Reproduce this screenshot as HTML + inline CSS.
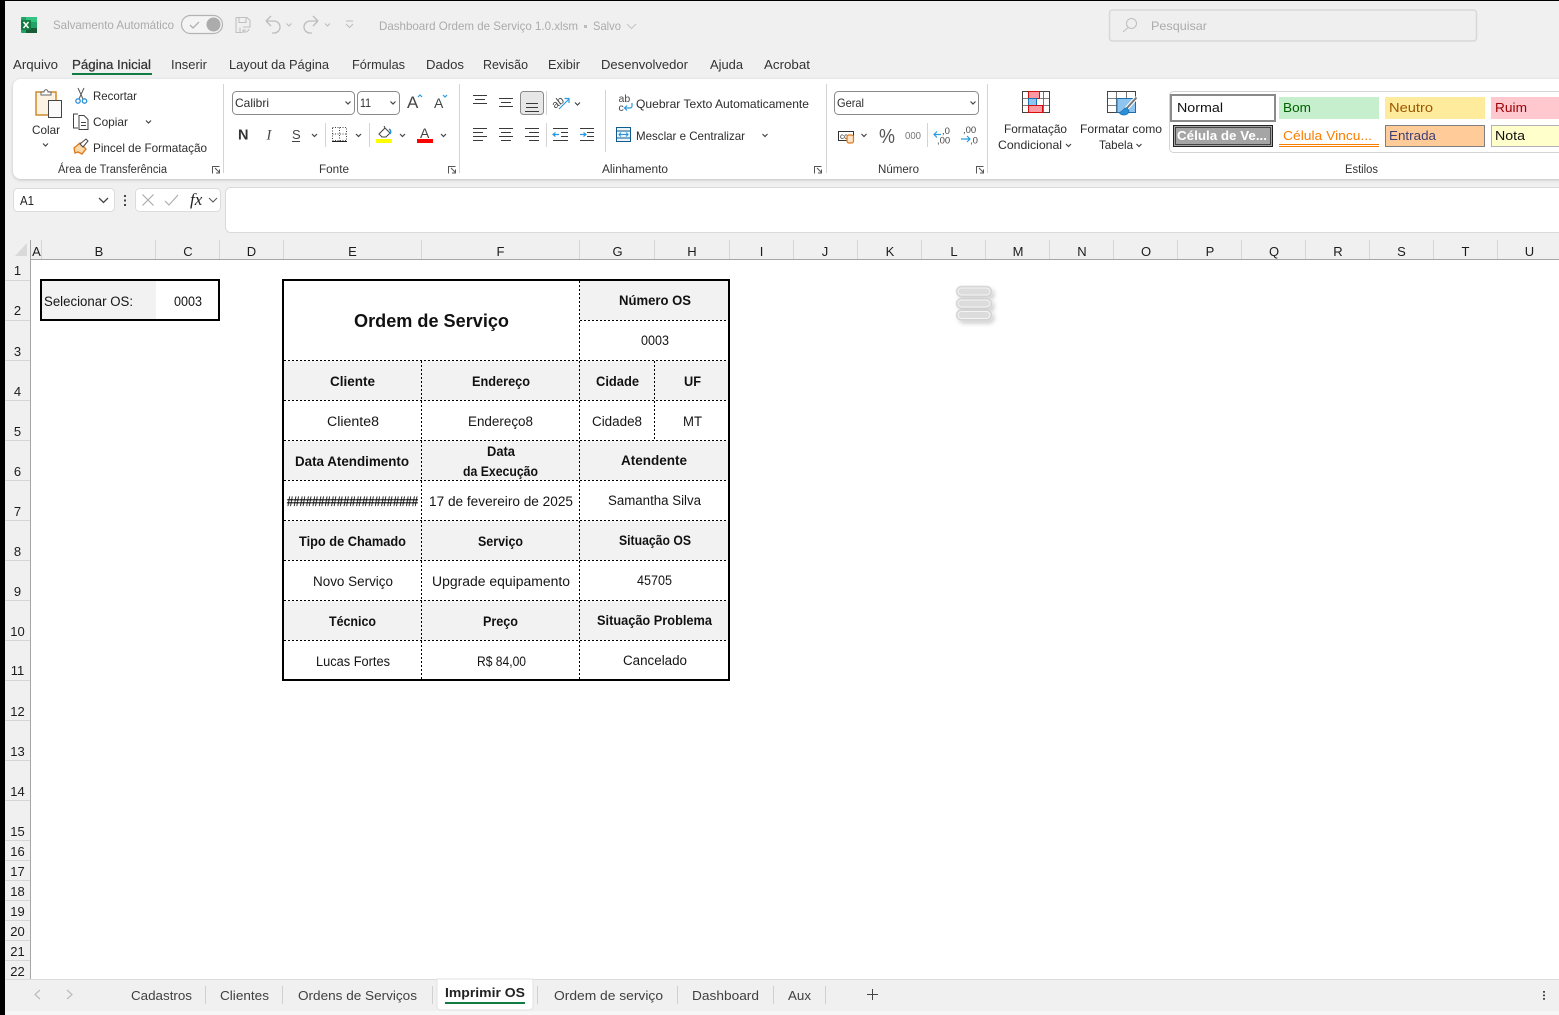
<!DOCTYPE html>
<html><head><meta charset="utf-8"><title>Excel</title>
<style>
html,body{margin:0;padding:0;width:1559px;height:1015px;overflow:hidden;background:#f0f0f0}
svg{display:block;position:absolute;left:0;top:0}
text{font-family:"Liberation Sans",sans-serif;fill:#2a2a2a;white-space:pre}
.q{font-size:12px;fill:#ababab}
.t{font-size:12.5px;fill:#333}
.r{font-size:12px;fill:#2c2c2c}
.g{font-size:11.5px;fill:#333}
.s{font-size:13px}
.c{font-size:13.5px;fill:#151515}
.b{font-size:13.5px;font-weight:bold;fill:#111}
.h{font-size:13px;fill:#1c1c1c;text-anchor:middle}
.tb{font-size:13px;fill:#404040}
.ch{fill:none;stroke:#444;stroke-width:1.2}
.ln{fill:none;stroke:#3a3a3a;stroke-width:1.1}
.sep{stroke:#d4d4d4;stroke-width:1}
.dot{stroke:#000;stroke-width:1;stroke-dasharray:2 2;fill:none}
.hs{stroke:#d6d6d6;stroke-width:1}
.blue{fill:none;stroke:#2b9ae0;stroke-width:1.2}
</style></head><body>
<svg width="1559" height="1015" viewBox="0 0 1559 1015" xmlns="http://www.w3.org/2000/svg">
<defs>
<filter id="sh" x="-5%" y="-20%" width="110%" height="140%"><feDropShadow dx="0" dy="1" stdDeviation="1.5" flood-color="#000" flood-opacity=".2"/></filter>
<filter id="ps" x="-30%" y="-50%" width="170%" height="220%"><feGaussianBlur in="SourceGraphic" stdDeviation=".45" result="b"/><feDropShadow in="b" dx="2.500" dy="3" stdDeviation="2.200" flood-color="#000" flood-opacity=".2"/></filter>
</defs>
<rect width="1559" height="1015" fill="#f0f0f0"/>

<!-- Title bar -->
<rect x="21" y="17" width="16" height="16" rx="1" fill="#21a366"/>
<rect x="26" y="17" width="11" height="5" fill="#33c481"/>
<rect x="26" y="28" width="11" height="5" fill="#185c37"/>
<rect x="21" y="20" width="10" height="10" rx="1" fill="#107c41"/>
<path d="M23.5 22l5 6M28.5 22l-5 6" stroke="#fff" stroke-width="1.5" fill="none"/>
<text class="q" x="53" y="29" textLength="121" lengthAdjust="spacingAndGlyphs">Salvamento Automático</text>
<rect x="181.5" y="15.5" width="41" height="18" rx="9" fill="#f4f4f4" stroke="#b3b3b3" stroke-width="1.2"/>
<path d="M190 25l3 3 6-6" fill="none" stroke="#b0b0b0" stroke-width="1.3"/>
<circle cx="213.5" cy="24.5" r="7" fill="#acacac"/>
<path d="M236 17.500h11l3 3v6M236 17.500v15h6M239 17.500v5h7v-5M240 32.500v-5M243 27h7v-1M249 29c-1 3-4 4-6 2M243 33v-3h3" fill="none" stroke="#c0c0c0" stroke-width="1.1"/>
<path d="M266 21h8a6 6 0 0 1 0 12h-2M266 21l5-5M266 21l5 5" fill="none" stroke="#bcbcbc" stroke-width="1.3"/>
<path d="M286.500 23.500l2.500 2.500 2.500-2.500M325 23.500l2.500 2.500 2.500-2.500" fill="none" stroke="#bcbcbc"/>
<path d="M318 21h-8a6 6 0 0 0 0 12h2M318 21l-5-5M318 21l-5 5" fill="none" stroke="#bcbcbc" stroke-width="1.3"/>
<path d="M346 21h7M346 24l3.500 3.500 3.500-3.500" fill="none" stroke="#bcbcbc"/>
<text class="q" x="379" y="30" textLength="199" lengthAdjust="spacingAndGlyphs">Dashboard Ordem de Serviço 1.0.xlsm</text>
<rect x="584" y="25" width="3" height="3" fill="#bcbcbc"/>
<text class="q" x="593" y="30" textLength="28" lengthAdjust="spacingAndGlyphs">Salvo</text>
<path d="M627 24l4.500 4.500 4.500-4.500" fill="none" stroke="#c4c4c4"/>
<rect x="1109.500" y="10" width="367" height="31" rx="3" fill="#efefef" stroke="#d8d8d8" stroke-width="1.500"/>
<circle cx="1131.500" cy="23.500" r="5" fill="none" stroke="#c0c0c0" stroke-width="1.100"/>
<path d="M1128 27.500l-5 4.500" stroke="#c0c0c0" stroke-width="1.100"/>
<text class="q" x="1151" y="30" textLength="56" lengthAdjust="spacingAndGlyphs">Pesquisar</text>

<!-- Ribbon tabs -->
<text class="t" x="13" y="69" textLength="45" lengthAdjust="spacingAndGlyphs">Arquivo</text>
<text class="t" x="72" y="69" textLength="79" lengthAdjust="spacingAndGlyphs" stroke="#333" stroke-width=".25">Página Inicial</text>
<rect x="72" y="73" width="80" height="2" fill="#107c41"/>
<text class="t" x="171" y="69" textLength="36" lengthAdjust="spacingAndGlyphs">Inserir</text>
<text class="t" x="229" y="69" textLength="100" lengthAdjust="spacingAndGlyphs">Layout da Página</text>
<text class="t" x="352" y="69" textLength="53" lengthAdjust="spacingAndGlyphs">Fórmulas</text>
<text class="t" x="426" y="69" textLength="38" lengthAdjust="spacingAndGlyphs">Dados</text>
<text class="t" x="483" y="69" textLength="45" lengthAdjust="spacingAndGlyphs">Revisão</text>
<text class="t" x="548" y="69" textLength="32" lengthAdjust="spacingAndGlyphs">Exibir</text>
<text class="t" x="601" y="69" textLength="87" lengthAdjust="spacingAndGlyphs">Desenvolvedor</text>
<text class="t" x="710" y="69" textLength="33" lengthAdjust="spacingAndGlyphs">Ajuda</text>
<text class="t" x="764" y="69" textLength="46" lengthAdjust="spacingAndGlyphs">Acrobat</text>

<!-- Ribbon -->
<rect x="13" y="79" width="1560" height="100" rx="8" fill="#fff" filter="url(#sh)"/>
<path class="sep" d="M223.500 84v89M459.500 84v89M826.500 84v89M987.500 84v89"/>
<path class="sep" d="M325.500 123v24M369.500 123v24M546.500 91v24M546.500 123v24M605.500 90v62M927.500 123v24"/>
<text class="g" x="58" y="173" textLength="109" lengthAdjust="spacingAndGlyphs">Área de Transferência</text>
<text class="g" x="319" y="173" textLength="30" lengthAdjust="spacingAndGlyphs">Fonte</text>
<text class="g" x="602" y="173" textLength="66" lengthAdjust="spacingAndGlyphs">Alinhamento</text>
<text class="g" x="878" y="173" textLength="41" lengthAdjust="spacingAndGlyphs">Número</text>
<text class="g" x="1345" y="173" textLength="33" lengthAdjust="spacingAndGlyphs">Estilos</text>
<path d="M212.500 173.500v-7h7M215 168l4.500 4.500M219.500 169.500v3.500h-3.500M448.500 173.500v-7h7M451 168l4.500 4.500M455.500 169.500v3.500h-3.500M814.500 173.500v-7h7M817 168l4.500 4.500M821.500 169.500v3.500h-3.500M976.500 173.500v-7h7M979 168l4.500 4.500M983.500 169.500v3.500h-3.500" fill="none" stroke="#555"/>

<!-- Clipboard -->
<rect x="36" y="92" width="20" height="23" fill="#fdf3e2" stroke="#d08a2a" stroke-width="1.500"/>
<path d="M41 95v-3h3c0-3 4-3 4 0h3v3z" fill="#fff" stroke="#666"/>
<rect x="48.500" y="100.500" width="13" height="17" fill="#fafafa" stroke="#444"/>
<text class="r" x="32" y="134" textLength="28" lengthAdjust="spacingAndGlyphs">Colar</text>
<path class="ch" d="M43 143.500l2.500 2.500 2.500-2.500"/>
<path d="M78 88l5 11M84 88l-5 11" stroke="#555" fill="none"/>
<circle cx="78" cy="101" r="2.200" fill="none" stroke="#2b8fd8" stroke-width="1.300"/>
<circle cx="84.500" cy="101" r="2.200" fill="none" stroke="#2b8fd8" stroke-width="1.300"/>
<text class="r" x="93" y="100" textLength="44" lengthAdjust="spacingAndGlyphs">Recortar</text>
<path d="M78 114h-4.500v14h4.500M79 115.500h5l4 4v10h-9zM81 122.500h5M81 125.500h5" fill="none" stroke="#444" stroke-width="1"/>
<text class="r" x="93" y="126" textLength="35" lengthAdjust="spacingAndGlyphs">Copiar</text>
<path class="ch" d="M146 120.500l2.500 2.500 2.500-2.500"/>
<path d="M74 148l6-5 6 6-4 5-4-2-3 1z" fill="#fbd9a8" stroke="#e0781a" stroke-width="1.300"/>
<path d="M80 144l6-5 2 2-5 6z" fill="#fff" stroke="#444"/>
<text class="r" x="93" y="152" textLength="114" lengthAdjust="spacingAndGlyphs">Pincel de Formatação</text>

<!-- Font -->
<rect x="232.500" y="91.500" width="122" height="23" rx="4" fill="#fff" stroke="#8a8a8a"/>
<text class="r" x="235" y="107" textLength="34" lengthAdjust="spacingAndGlyphs">Calibri</text>
<path class="ch" d="M345.500 101.500l2.500 2.500 2.500-2.500"/>
<rect x="357.500" y="91.500" width="42" height="23" rx="4" fill="#fff" stroke="#8a8a8a"/>
<text class="r" x="360" y="107" textLength="11" lengthAdjust="spacingAndGlyphs">11</text>
<path class="ch" d="M390.500 101.500l2.500 2.500 2.500-2.500"/>
<text x="407" y="108" font-size="17" style="fill:#444">A</text>
<path class="blue" d="M418 97l2-2 2 2"/>
<text x="434" y="108" font-size="14" style="fill:#444">A</text>
<path class="blue" d="M443 95l2 2 2-2"/>
<text x="238" y="139.500" font-size="14.500" font-weight="bold" style="fill:#333">N</text>
<text x="266.500" y="139.500" font-size="14.500" font-style="italic" style="font-family:'Liberation Serif',serif;fill:#444">I</text>
<text x="292" y="139" font-size="13" style="fill:#444">S</text>
<rect x="292" y="141" width="8" height="1" fill="#444"/>
<path class="ch" d="M312 134l2.500 2.500 2.500-2.500M356 134l2.500 2.500 2.500-2.500M400 134l2.500 2.500 2.500-2.500M441 134l2.500 2.500 2.500-2.500"/>
<path d="M332.500 127.500h14v13h-14zM339.500 127.500v13M332.500 134h14" fill="none" stroke="#444" stroke-dasharray="1 1.500"/>
<rect x="332" y="141" width="15" height="1" fill="#222"/>
<path d="M379 134l6-6 5 5-4 4h-4zM385 128l-1-2" fill="#fff" stroke="#444"/>
<path d="M389 129c2 1 2 3 1 5" fill="none" stroke="#2b8fd8" stroke-width="1.500"/>
<rect x="376" y="139" width="16" height="4" fill="#ffff00"/>
<text x="420" y="138" font-size="14" style="fill:#444">A</text>
<rect x="417" y="139" width="16" height="4" fill="#ff0000"/>

<!-- Alignment -->
<rect x="520.500" y="91.500" width="23" height="23" rx="3" fill="#e7e7e7" stroke="#8a8a8a"/>
<path class="ln" d="M473 95.500h14M475 99.500h10M473 103.500h14M499 98.500h14M501 102.500h10M499 106.500h14M526 103.500h12M526 107.500h12M525 111.500h14"/>
<path class="ln" d="M473 128.500h14M473 132.500h10M473 136.500h14M473 140.500h10M499 128.500h14M501 132.500h10M499 136.500h14M501 140.500h10M525 128.500h14M529 132.500h10M525 136.500h14M529 140.500h10"/>
<path class="ln" d="M553 128.500h15M561 132.500h7M561 136.500h7M553 140.500h15M580 128.500h14M587 132.500h7M587 136.500h7M580 140.500h14"/>
<path class="blue" d="M553 134.500h6M555.500 132.500l-2.500 2 2.500 2M580 134.500h5.500M583.500 132.500l2.500 2-2.500 2"/>
<text x="552" y="106" font-size="11" transform="rotate(-38 558 103)" style="fill:#444">ab</text>
<path class="blue" d="M559 109l10-10M564.500 98.500h4.500v4.500"/>
<path class="ch" d="M575 102.500l2.500 2.500 2.500-2.500"/>
<text x="618.500" y="102" font-size="10.500" style="fill:#444">ab</text>
<text x="618.500" y="111" font-size="10.500" style="fill:#444">c</text>
<path class="blue" d="M632 103v3a2 2 0 0 1-2 2h-5M627 105.500l-2.500 2.500 2.500 2.500"/>
<text class="r" x="636" y="108" textLength="173" lengthAdjust="spacingAndGlyphs">Quebrar Texto Automaticamente</text>
<rect x="616.500" y="127.500" width="14" height="14" fill="#eaf4fc" stroke="#0f5c8c"/>
<path d="M616.500 131h14M616.500 138h14" stroke="#0f5c8c"/>
<path d="M619 134.500h9M621 132.500l-2 2 2 2M626 132.500l2 2-2 2" fill="none" stroke="#2b8fd8"/>
<text class="r" x="636" y="140" textLength="109" lengthAdjust="spacingAndGlyphs">Mesclar e Centralizar</text>
<path class="ch" d="M762.500 134l2.500 2.500 2.500-2.500"/>

<!-- Number -->
<rect x="834.500" y="91.500" width="144" height="23" rx="4" fill="#fff" stroke="#8a8a8a"/>
<text class="r" x="837" y="107" textLength="27" lengthAdjust="spacingAndGlyphs">Geral</text>
<path class="ch" d="M970.500 101.500l2.500 2.500 2.500-2.500"/>
<rect x="838.500" y="131.500" width="15" height="9" fill="#fff" stroke="#333"/>
<text x="840" y="139" font-size="8" style="fill:#333">cc</text>
<rect x="847" y="135" width="6.500" height="8" rx="2" fill="#fde3c4" stroke="#e0781a" stroke-width="1.200"/>
<path class="ch" d="M861.500 134l2.500 2.500 2.500-2.500"/>
<text x="879" y="143" font-size="20" textLength="16" lengthAdjust="spacingAndGlyphs" style="fill:#555">%</text>
<text x="905" y="139" font-size="10" textLength="16" lengthAdjust="spacingAndGlyphs" style="fill:#777">000</text>
<path class="blue" d="M934 134.500h7M937 131.500l-3 3 3 3"/>
<text x="942" y="134" font-size="9.500" style="fill:#444">,0</text>
<text x="937" y="143.500" font-size="9.500" style="fill:#444">,00</text>
<text x="963" y="133" font-size="9.500" style="fill:#444">,00</text>
<path class="blue" d="M961 139h9M967 136l3 3-3 3"/>
<text x="970" y="143.500" font-size="9.500" style="fill:#444">,0</text>

<!-- Conditional formatting -->
<rect x="1022.500" y="91.500" width="27" height="21" fill="#fff" stroke="#444"/>
<path d="M1028.500 91.500v21M1036.500 91.500v21M1043.500 91.500v21M1022.500 98.500h27M1022.500 105.500h27" fill="none" stroke="#555" stroke-width=".8"/>
<rect x="1028.500" y="91.500" width="11" height="7" fill="#ff9aa2" stroke="#d01010"/>
<rect x="1028.500" y="98.500" width="8" height="7" fill="#8ec4ee" stroke="#1a6fb0"/>
<rect x="1028.500" y="105.500" width="14" height="7" fill="#ff9aa2" stroke="#d01010"/>
<text class="r" x="1004" y="133" textLength="63" lengthAdjust="spacingAndGlyphs">Formatação</text>
<text class="r" x="998" y="149" textLength="64" lengthAdjust="spacingAndGlyphs">Condicional</text>
<path class="ch" d="M1066 144l2.500 2.500 2.500-2.500"/>
<!-- Format as table -->
<rect x="1107.500" y="91.500" width="28" height="21" fill="#fff" stroke="#444"/>
<path d="M1116.500 91.500v21M1126.500 91.500v21M1107.500 98.500h28M1107.500 105.500h28" stroke="#555" stroke-width=".8"/>
<rect x="1117" y="98.500" width="18.500" height="14" fill="#8ec4ee" stroke="#1a6fb0"/>
<path d="M1136.500 97.500l-10 11" stroke="#fff" stroke-width="4"/>
<path d="M1136.500 97.500l-10 11" stroke="#777" stroke-width="2"/>
<path d="M1127 108c-3-1-4 4-8 4.500c3 4 10 3 10-2z" fill="#2b8fd8" stroke="#1a6fb0" stroke-width=".7"/>
<text class="r" x="1080" y="133" textLength="82" lengthAdjust="spacingAndGlyphs">Formatar como</text>
<text class="r" x="1099" y="149" textLength="34" lengthAdjust="spacingAndGlyphs">Tabela</text>
<path class="ch" d="M1136.500 144l2.500 2.500 2.500-2.500"/>

<!-- Styles -->
<rect x="1169.500" y="91.500" width="400" height="61" rx="4" fill="#fff" stroke="#d4d4d4"/>
<rect x="1171" y="95" width="104" height="26" fill="#fff" stroke="#8a8a8a" stroke-width="2"/>
<text class="s" x="1177" y="112" textLength="46" lengthAdjust="spacingAndGlyphs" style="fill:#111">Normal</text>
<rect x="1279" y="97" width="100" height="22" fill="#c6efce"/>
<text class="s" x="1283" y="112" textLength="28" lengthAdjust="spacingAndGlyphs" style="fill:#006100">Bom</text>
<rect x="1385" y="97" width="100" height="22" fill="#ffeb9c"/>
<text class="s" x="1389" y="112" textLength="44" lengthAdjust="spacingAndGlyphs" style="fill:#9c5700">Neutro</text>
<rect x="1491" y="97" width="80" height="22" fill="#ffc7ce"/>
<text class="s" x="1495" y="112" textLength="32" lengthAdjust="spacingAndGlyphs" style="fill:#9c0006">Ruim</text>
<rect x="1173.500" y="125.500" width="99" height="21" fill="#a5a5a5" stroke="#222"/>
<rect x="1175.500" y="127.500" width="95" height="17" fill="none" stroke="#444"/>
<text class="s" x="1177" y="140" textLength="90" lengthAdjust="spacingAndGlyphs" font-weight="bold" style="fill:#fff">Célula de Ve...</text>
<text class="s" x="1283" y="140" textLength="89" lengthAdjust="spacingAndGlyphs" style="fill:#fa7d00">Célula Vincu...</text>
<path d="M1279 144.500h100M1279 146.500h100" stroke="#fa7d00"/>
<rect x="1385.500" y="125.500" width="99" height="21" fill="#ffcc99" stroke="#7f7f7f"/>
<text class="s" x="1389" y="140" textLength="47" lengthAdjust="spacingAndGlyphs" style="fill:#3f3f76">Entrada</text>
<rect x="1491.500" y="125.500" width="80" height="21" fill="#ffffcc" stroke="#b2b2b2"/>
<text class="s" x="1495" y="140" textLength="30" lengthAdjust="spacingAndGlyphs" style="fill:#111">Nota</text>

<!-- Formula bar -->
<rect x="13.500" y="188.500" width="101" height="23" rx="4" fill="#fff" stroke="#dcdcdc"/>
<text class="s" x="20" y="205" textLength="14" lengthAdjust="spacingAndGlyphs" style="fill:#222">A1</text>
<path d="M99 198l4.500 4.500 4.500-4.500" fill="none" stroke="#444" stroke-width="1.300"/>
<path d="M125 195v2M125 199.500v2M125 204v2" stroke="#444" stroke-width="2"/>
<rect x="135.500" y="188.500" width="85" height="23" rx="4" fill="#fff" stroke="#dcdcdc"/>
<path d="M142.500 194.500l11 11M153.500 194.500l-11 11M165 201l4 4 9-10" fill="none" stroke="#aaa" stroke-width="1.100"/>
<text x="190" y="205" font-size="17" font-style="italic" style="font-family:'Liberation Serif',serif;fill:#222">fx</text>
<path d="M209 198l4 4 4-4" fill="none" stroke="#555"/>
<rect x="225.500" y="187.500" width="1345" height="45" rx="5" fill="#fff" stroke="#dadada"/>

<!-- Sheet -->
<rect x="31" y="260" width="1528" height="720" fill="#fff"/>
<path d="M15 256h12v-13z" fill="#d9d9d9"/>
<path class="hs" d="M41.500 240v19M155.500 240v19M219.500 240v19M283.500 240v19M421.500 240v19M579.500 240v19M654.500 240v19M729.500 240v19M793.500 240v19M857.500 240v19M921.500 240v19M985.500 240v19M1049.500 240v19M1113.500 240v19M1177.500 240v19M1241.500 240v19M1305.500 240v19M1369.500 240v19M1433.500 240v19M1497.500 240v19"/>
<path class="hs" d="M5 280.500h25M5 320.500h25M5 360.500h25M5 400.500h25M5 440.500h25M5 480.500h25M5 520.500h25M5 560.500h25M5 600.500h25M5 640.500h25M5 680.500h25M5 720.500h25M5 760.500h25M5 800.500h25M5 840.500h25M5 860.500h25M5 880.500h25M5 900.500h25M5 920.500h25M5 940.500h25M5 960.500h25"/>
<rect x="30" y="259" width="1529" height="1" fill="#a6a6a6"/>
<rect x="30" y="240" width="1" height="740" fill="#a6a6a6"/>
<text class="h" x="36.500" y="256">A</text><text class="h" x="99" y="256">B</text><text class="h" x="188" y="256">C</text><text class="h" x="251.500" y="256">D</text><text class="h" x="352.500" y="256">E</text><text class="h" x="500.500" y="256">F</text><text class="h" x="617.500" y="256">G</text><text class="h" x="692" y="256">H</text><text class="h" x="761.500" y="256">I</text><text class="h" x="825" y="256">J</text><text class="h" x="890" y="256">K</text><text class="h" x="954" y="256">L</text><text class="h" x="1018" y="256">M</text><text class="h" x="1082" y="256">N</text><text class="h" x="1146" y="256">O</text><text class="h" x="1210" y="256">P</text><text class="h" x="1274" y="256">Q</text><text class="h" x="1338" y="256">R</text><text class="h" x="1401.500" y="256">S</text><text class="h" x="1465.500" y="256">T</text><text class="h" x="1529.500" y="256">U</text>
<text class="h" x="17.500" y="275">1</text><text class="h" x="17.500" y="315">2</text><text class="h" x="17.500" y="356">3</text><text class="h" x="17.500" y="396">4</text><text class="h" x="17.500" y="436">5</text><text class="h" x="17.500" y="476">6</text><text class="h" x="17.500" y="516">7</text><text class="h" x="17.500" y="556">8</text><text class="h" x="17.500" y="596">9</text><text class="h" x="17.500" y="636">10</text><text class="h" x="17.500" y="675">11</text><text class="h" x="17.500" y="716">12</text><text class="h" x="17.500" y="756">13</text><text class="h" x="17.500" y="796">14</text><text class="h" x="17.500" y="836">15</text><text class="h" x="17.500" y="856">16</text><text class="h" x="17.500" y="876">17</text><text class="h" x="17.500" y="896">18</text><text class="h" x="17.500" y="916">19</text><text class="h" x="17.500" y="936">20</text><text class="h" x="17.500" y="956">21</text><text class="h" x="17.500" y="976">22</text>

<!-- Selector -->
<rect x="41" y="280" width="115" height="40" fill="#f2f2f2"/>
<rect x="41" y="280" width="178" height="40" fill="none" stroke="#000" stroke-width="2"/>
<text class="c" x="44" y="306" textLength="89" lengthAdjust="spacingAndGlyphs">Selecionar OS:</text>
<text class="c" x="174" y="306" textLength="28" lengthAdjust="spacingAndGlyphs">0003</text>

<!-- Form -->
<rect x="580" y="281" width="148" height="39" fill="#f2f2f2"/>
<rect x="284" y="361" width="444" height="39" fill="#f2f2f2"/>
<rect x="284" y="441" width="444" height="39" fill="#f2f2f2"/>
<rect x="284" y="521" width="444" height="39" fill="#f2f2f2"/>
<rect x="284" y="601" width="444" height="39" fill="#f2f2f2"/>
<path class="dot" d="M580 320.500h148M284 360.500h444M284 400.500h444M284 440.500h444M284 480.500h444M284 520.500h444M284 560.500h444M284 600.500h444M284 640.500h444M421.500 361v318M579.500 281v398M654.500 361v79"/>
<rect x="283" y="280" width="446" height="400" fill="none" stroke="#000" stroke-width="2"/>
<text x="354" y="327" font-size="18" font-weight="bold" textLength="155" lengthAdjust="spacingAndGlyphs" style="fill:#111">Ordem de Serviço</text>
<text class="b" x="619" y="305" textLength="72" lengthAdjust="spacingAndGlyphs">Número OS</text>
<text class="c" x="641" y="345" textLength="28" lengthAdjust="spacingAndGlyphs">0003</text>
<text class="b" x="330" y="386" textLength="45" lengthAdjust="spacingAndGlyphs">Cliente</text>
<text class="b" x="472" y="386" textLength="58" lengthAdjust="spacingAndGlyphs">Endereço</text>
<text class="b" x="596" y="386" textLength="43" lengthAdjust="spacingAndGlyphs">Cidade</text>
<text class="b" x="684" y="386" textLength="17" lengthAdjust="spacingAndGlyphs">UF</text>
<text class="c" x="327" y="426" textLength="52" lengthAdjust="spacingAndGlyphs">Cliente8</text>
<text class="c" x="468" y="426" textLength="65" lengthAdjust="spacingAndGlyphs">Endereço8</text>
<text class="c" x="592" y="426" textLength="50" lengthAdjust="spacingAndGlyphs">Cidade8</text>
<text class="c" x="683" y="426" textLength="19" lengthAdjust="spacingAndGlyphs">MT</text>
<text class="b" x="295" y="466" textLength="114" lengthAdjust="spacingAndGlyphs">Data Atendimento</text>
<text class="b" x="487" y="456" textLength="28" lengthAdjust="spacingAndGlyphs">Data</text>
<text class="b" x="463" y="476" textLength="75" lengthAdjust="spacingAndGlyphs">da Execução</text>
<text class="b" x="621" y="465" textLength="66" lengthAdjust="spacingAndGlyphs">Atendente</text>
<text class="c" x="287" y="506" textLength="131" lengthAdjust="spacingAndGlyphs" stroke="#151515" stroke-width=".35">#####################</text>
<text class="c" x="429" y="506" textLength="144" lengthAdjust="spacingAndGlyphs">17 de fevereiro de 2025</text>
<text class="c" x="608" y="505" textLength="93" lengthAdjust="spacingAndGlyphs">Samantha Silva</text>
<text class="b" x="299" y="546" textLength="107" lengthAdjust="spacingAndGlyphs">Tipo de Chamado</text>
<text class="b" x="478" y="546" textLength="45" lengthAdjust="spacingAndGlyphs">Serviço</text>
<text class="b" x="619" y="545" textLength="72" lengthAdjust="spacingAndGlyphs">Situação OS</text>
<text class="c" x="313" y="586" textLength="80" lengthAdjust="spacingAndGlyphs">Novo Serviço</text>
<text class="c" x="432" y="586" textLength="138" lengthAdjust="spacingAndGlyphs">Upgrade equipamento</text>
<text class="c" x="637" y="585" textLength="35" lengthAdjust="spacingAndGlyphs">45705</text>
<text class="b" x="329" y="626" textLength="47" lengthAdjust="spacingAndGlyphs">Técnico</text>
<text class="b" x="483" y="626" textLength="35" lengthAdjust="spacingAndGlyphs">Preço</text>
<text class="b" x="597" y="625" textLength="115" lengthAdjust="spacingAndGlyphs">Situação Problema</text>
<text class="c" x="316" y="666" textLength="74" lengthAdjust="spacingAndGlyphs">Lucas Fortes</text>
<text class="c" x="477" y="666" textLength="49" lengthAdjust="spacingAndGlyphs">R$ 84,00</text>
<text class="c" x="623" y="665" textLength="64" lengthAdjust="spacingAndGlyphs">Cancelado</text>

<!-- Pills -->
<g fill="#dcdcdc" stroke="#c8c8c8" stroke-width="1" filter="url(#ps)">
<rect x="956.500" y="286.500" width="35" height="10" rx="5"/>
<rect x="956.500" y="298.500" width="35" height="10" rx="5"/>
<rect x="956.500" y="310" width="35" height="10" rx="5"/>
</g>
<g fill="none" stroke="#f4f4f4" stroke-width="1">
<rect x="958" y="288" width="32" height="7" rx="3.500"/>
<rect x="958" y="300" width="32" height="7" rx="3.500"/>
<rect x="958" y="311.500" width="32" height="7" rx="3.500"/>
</g>

<!-- Sheet tabs -->
<rect x="5" y="979" width="1554" height="36" fill="#f0f0f0"/>
<rect x="5" y="979" width="1554" height="1" fill="#dcdcdc"/>
<rect x="5" y="1011" width="1554" height="4" fill="#f6f6f6"/>
<path d="M40 990l-5 4.500 5 4.500M67 990l5 4.500-5 4.500" fill="none" stroke="#bcbcbc" stroke-width="1.200"/>
<text class="tb" x="131" y="1000" textLength="61" lengthAdjust="spacingAndGlyphs">Cadastros</text>
<text class="tb" x="220" y="1000" textLength="49" lengthAdjust="spacingAndGlyphs">Clientes</text>
<text class="tb" x="298" y="1000" textLength="119" lengthAdjust="spacingAndGlyphs">Ordens de Serviços</text>
<path d="M437 979h96v27a4 4 0 0 1-4 4h-88a4 4 0 0 1-4-4z" fill="#fff" stroke="#e2e2e2"/>
<text x="445" y="997" font-size="13" font-weight="bold" textLength="80" lengthAdjust="spacingAndGlyphs" style="fill:#222">Imprimir OS</text>
<rect x="445" y="1002" width="80" height="2" fill="#107c41"/>
<text class="tb" x="554" y="1000" textLength="109" lengthAdjust="spacingAndGlyphs">Ordem de serviço</text>
<text class="tb" x="692" y="1000" textLength="67" lengthAdjust="spacingAndGlyphs">Dashboard</text>
<text class="tb" x="788" y="1000" textLength="23" lengthAdjust="spacingAndGlyphs">Aux</text>
<path stroke="#d0d0d0" d="M205.500 986v18M282.500 986v18M432.500 986v18M537.500 986v18M677.500 986v18M773.500 986v18M825.500 986v18"/>
<path d="M867 994.500h11M872.500 989v11" stroke="#444" fill="none"/>
<path d="M1544 991v1.800M1544 994.500v1.800M1544 998v1.800" stroke="#333" stroke-width="1.800"/>

<!-- Black edges -->
<rect x="0" y="0" width="1559" height="1" fill="#000"/>
<rect x="0" y="0" width="5" height="1015" fill="#000"/>
</svg>
</body></html>
